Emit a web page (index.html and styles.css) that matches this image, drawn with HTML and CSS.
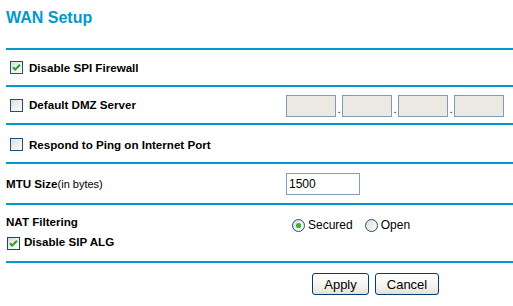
FILE: index.html
```html
<!DOCTYPE html>
<html>
<head>
<meta charset="utf-8">
<title>WAN Setup</title>
<link rel="stylesheet" href="styles.css">
</head>
<body>
<div class="page">
  <div class="title">WAN Setup</div>
  <div class="rule"></div>

  <div class="row h35">
    <label class="chk">
      <svg class="box" width="13" height="13" viewBox="0 0 13 13"><defs><linearGradient id="g1" x1="0" y1="0" x2="1" y2="1"><stop offset="0" stop-color="#dcdcd6"/><stop offset="1" stop-color="#ffffff"/></linearGradient></defs><rect x="0.5" y="0.5" width="12" height="12" fill="url(#g1)" stroke="#1c5180"/><path d="M3 6.2 L5.2 8.6 L10 3.8" fill="none" stroke="#21a121" stroke-width="2"/></svg>
      <span class="lbl">Disable SPI Firewall</span>
    </label>
  </div>
  <div class="rule"></div>

  <div class="row h36">
    <label class="chk">
      <svg class="box" width="13" height="13" viewBox="0 0 13 13"><defs><linearGradient id="g2" x1="0" y1="0" x2="1" y2="1"><stop offset="0" stop-color="#dcdcd6"/><stop offset="1" stop-color="#ffffff"/></linearGradient></defs><rect x="0.5" y="0.5" width="12" height="12" fill="url(#g2)" stroke="#1c5180"/></svg>
      <span class="lbl">Default DMZ Server</span>
    </label>
    <div class="ip">
      <span class="field dis"></span><span class="dot">.</span>
      <span class="field dis"></span><span class="dot">.</span>
      <span class="field dis"></span><span class="dot">.</span>
      <span class="field dis"></span>
    </div>
  </div>
  <div class="rule"></div>

  <div class="row h37">
    <label class="chk low">
      <svg class="box" width="13" height="13" viewBox="0 0 13 13"><defs><linearGradient id="g3" x1="0" y1="0" x2="1" y2="1"><stop offset="0" stop-color="#dcdcd6"/><stop offset="1" stop-color="#ffffff"/></linearGradient></defs><rect x="0.5" y="0.5" width="12" height="12" fill="url(#g3)" stroke="#1c5180"/></svg>
      <span class="lbl">Respond to Ping on Internet Port</span>
    </label>
  </div>
  <div class="rule"></div>

  <div class="row h39">
    <div class="plain"><span class="lbl">MTU Size</span><span class="norm">(in bytes)</span></div>
    <div class="mtu"><span class="field txt">1500</span></div>
  </div>
  <div class="rule"></div>

  <div class="nat">
    <div class="natrow">
      <div class="plain natlbl"><span class="lbl">NAT Filtering</span></div>
      <div class="radios">
        <span class="radio">
          <svg width="13" height="13" viewBox="0 0 13 13"><defs><linearGradient id="r1" x1="0" y1="0" x2="1" y2="1"><stop offset="0" stop-color="#dcdcd6"/><stop offset="1" stop-color="#ffffff"/></linearGradient></defs><circle cx="6.5" cy="6.5" r="6" fill="url(#r1)" stroke="#1c5180"/><circle cx="6.5" cy="6.5" r="2.6" fill="#3bb32a"/></svg>
          <span class="rlbl">Secured</span>
        </span>
        <span class="radio">
          <svg width="13" height="13" viewBox="0 0 13 13"><defs><linearGradient id="r2" x1="0" y1="0" x2="1" y2="1"><stop offset="0" stop-color="#dcdcd6"/><stop offset="1" stop-color="#ffffff"/></linearGradient></defs><circle cx="6.5" cy="6.5" r="6" fill="url(#r2)" stroke="#1c5180"/></svg>
          <span class="rlbl">Open</span>
        </span>
      </div>
    </div>
    <label class="chk sip">
      <span class="focus"><svg class="box" width="13" height="13" viewBox="0 0 13 13"><defs><linearGradient id="g4" x1="0" y1="0" x2="1" y2="1"><stop offset="0" stop-color="#dcdcd6"/><stop offset="1" stop-color="#ffffff"/></linearGradient></defs><rect x="0.5" y="0.5" width="12" height="12" fill="url(#g4)" stroke="#1c5180"/><path d="M3 6.2 L5.2 8.6 L10 3.8" fill="none" stroke="#21a121" stroke-width="2"/></svg></span>
      <span class="lbl">Disable SIP ALG</span>
    </label>
  </div>
  <div class="rule"></div>

  <div class="buttons">
    <button class="btn apply">Apply</button>
    <button class="btn cancel">Cancel</button>
  </div>
</div>
</body>
</html>
```

FILE: styles.css
```css
html, body {
  margin: 0;
  padding: 0;
  background: #ffffff;
}
body {
  font-family: "Liberation Sans", Arial, sans-serif;
  color: #000;
}
.page {
  padding-left: 6px;
  width: 507px;
}
.title {
  height: 40px;
  padding-top: 8px;
  font-size: 16px;
  line-height: 20px;
  font-weight: bold;
  color: #0099cc;
}
.rule {
  height: 2px;
  background: #0099cc;
}
.row {
  display: grid;
  grid-template-columns: 280px 1fr;
  align-items: center;
}
.h35 { height: 35px; }
.h36 { height: 36px; }
.h37 { height: 37px; }
.h39 { height: 39px; }
.chk {
  display: flex;
  align-items: center;
  padding-left: 4px;
}
.chk.low { padding-top: 2px; }
.box {
  display: block;
  flex: none;
}
.lbl {
  font-size: 11.6px;
  font-weight: bold;
  line-height: 14px;
}
.chk .lbl { margin-left: 6px; }
.norm {
  font-size: 11px;
  line-height: 14px;
}
.plain {
  display: flex;
  align-items: center;
}
.ip {
  display: flex;
  align-items: center;
  padding-top: 1px;
}
.field {
  display: block;
  box-sizing: border-box;
  width: 50px;
  height: 22px;
  border: 1px solid #7f9db9;
}
.field.dis {
  background: #ebe9e1;
}
.dot {
  width: 6px;
  font-size: 11px;
  line-height: 10px;
  text-align: center;
  align-self: flex-end;
  padding-bottom: 3px;
}
.mtu {
  padding-top: 1px;
}
.field.txt {
  width: 74px;
  background: #fff;
  font-size: 12px;
  line-height: 20px;
  padding-left: 2px;
}
.nat {
  height: 56px;
  display: flex;
  flex-direction: column;
}
.natrow {
  display: grid;
  grid-template-columns: 280px 1fr;
  align-items: center;
  height: 16px;
  margin-top: 12px;
}
.natlbl {
  margin-top: -6px;
}
.radios {
  display: flex;
  align-items: center;
  padding-left: 6px;
}
.radio {
  display: flex;
  align-items: center;
  margin-right: 12px;
}
.radio svg {
  display: block;
}
.rlbl {
  font-size: 12px;
  line-height: 14px;
  margin-left: 3px;
}
.sip {
  padding-left: 0;
  margin-top: 4px;
}
.focus {
  display: block;
  padding: 0;
  margin-left: 1px;
  outline: 1px dotted #333;
  outline-offset: -1px;
}
.sip .lbl {
  margin-left: 4px;
  margin-top: -3px;
}
.buttons {
  display: flex;
  justify-content: flex-start;
  padding-left: 306px;
  padding-top: 10px;
  gap: 6px;
}
.btn {
  box-sizing: border-box;
  height: 22px;
  border: 1px solid #003c74;
  border-radius: 3px;
  background: linear-gradient(#ffffff, #f4f3ee 60%, #e3e1d6);
  font-family: "Liberation Sans", Arial, sans-serif;
  font-size: 13px;
  padding: 0;
  color: #000;
}
.apply { width: 57px; }
.cancel { width: 64px; }
```
